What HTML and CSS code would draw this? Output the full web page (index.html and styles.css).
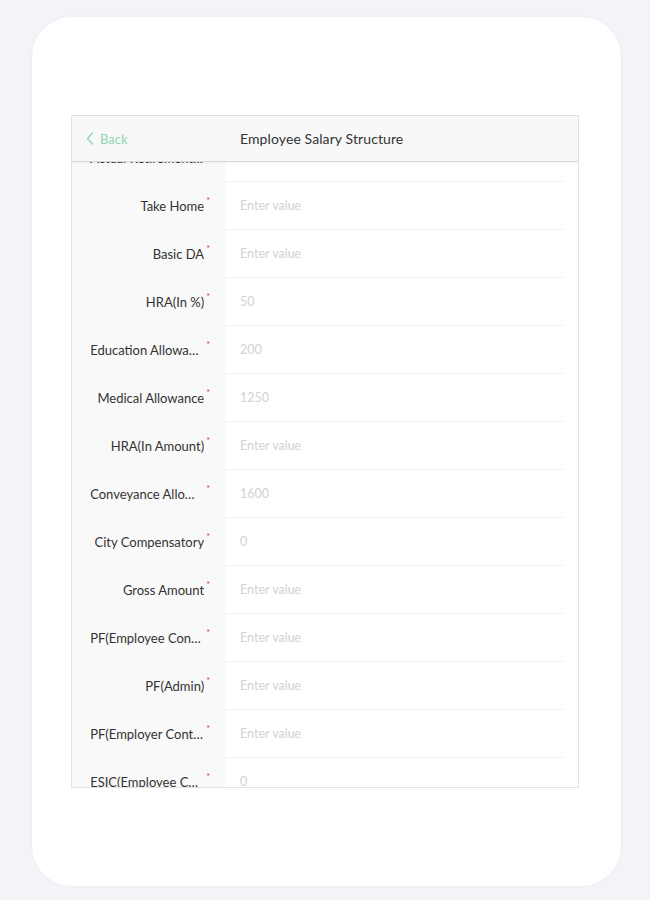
FILE: index.html
```html
<!DOCTYPE html>
<html lang="en">
<head>
<meta charset="utf-8">
<title>Employee Salary Structure</title>
<link rel="stylesheet" href="styles.css">
</head>
<body>
<div class="card">
  <div class="frame">
    <div class="header">
      <div class="back">
        <svg class="chev" width="8" height="13" viewBox="0 0 8 13"><path d="M6.5 1 L1.5 6.5 L6.5 12" fill="none" stroke="currentColor" stroke-width="1.4" stroke-linecap="round" stroke-linejoin="round"/></svg>
        <span>Back</span>
      </div>
      <div class="title">Employee Salary Structure</div>
    </div>
    <div class="scroll">
      <div class="list">
        <div class="row"><div class="label"><span class="txt">Actual Retirement Amt</span><span class="req">*</span></div><div class="value"><span class="ph">5000</span></div></div>
        <div class="row"><div class="label"><span class="txt">Take Home</span><span class="req">*</span></div><div class="value"><span class="ph">Enter value</span></div></div>
        <div class="row"><div class="label"><span class="txt">Basic DA</span><span class="req">*</span></div><div class="value"><span class="ph">Enter value</span></div></div>
        <div class="row"><div class="label"><span class="txt">HRA(In %)</span><span class="req">*</span></div><div class="value"><span class="ph">50</span></div></div>
        <div class="row"><div class="label"><span class="txt">Education Allowance</span><span class="req">*</span></div><div class="value"><span class="ph">200</span></div></div>
        <div class="row"><div class="label"><span class="txt">Medical Allowance</span><span class="req">*</span></div><div class="value"><span class="ph">1250</span></div></div>
        <div class="row"><div class="label"><span class="txt">HRA(In Amount)</span><span class="req">*</span></div><div class="value"><span class="ph">Enter value</span></div></div>
        <div class="row"><div class="label"><span class="txt">Conveyance Allowance</span><span class="req">*</span></div><div class="value"><span class="ph">1600</span></div></div>
        <div class="row"><div class="label"><span class="txt">City Compensatory</span><span class="req">*</span></div><div class="value"><span class="ph">0</span></div></div>
        <div class="row"><div class="label"><span class="txt">Gross Amount</span><span class="req">*</span></div><div class="value"><span class="ph">Enter value</span></div></div>
        <div class="row"><div class="label"><span class="txt">PF(Employee Contribution)</span><span class="req">*</span></div><div class="value"><span class="ph">Enter value</span></div></div>
        <div class="row"><div class="label"><span class="txt">PF(Admin)</span><span class="req">*</span></div><div class="value"><span class="ph">Enter value</span></div></div>
        <div class="row"><div class="label"><span class="txt">PF(Employer Contribution)</span><span class="req">*</span></div><div class="value"><span class="ph">Enter value</span></div></div>
        <div class="row"><div class="label"><span class="txt">ESIC(Employee Contribution)</span><span class="req">*</span></div><div class="value"><span class="ph">0</span></div></div>
      </div>
    </div>
  </div>
</div>
</body>
</html>
```

FILE: styles.css
```css
html, body {
  margin: 0;
  padding: 0;
}
body {
  background: #f3f4f7;
  font-family: "Lato", "Liberation Sans", sans-serif;
  width: 650px;
  height: 900px;
  overflow: hidden;
}
.card {
  margin: 17px 0 0 32px;
  width: 589px;
  height: 869px;
  box-sizing: border-box;
  background: #ffffff;
  border-radius: 40px;
  box-shadow: 0 0 4px rgba(0, 0, 0, 0.04);
  padding: 98px 0 0 39px;
}
.frame {
  width: 508px;
  height: 673px;
  box-sizing: border-box;
  border: 1px solid #e4e4e4;
  border-top-color: #dcdcdc;
  display: flex;
  flex-direction: column;
  background: #ffffff;
}
.header {
  height: 46px;
  box-sizing: border-box;
  flex: none;
  background: #f8f8f8;
  border-bottom: 1px solid #d9d9d9;
  display: flex;
  align-items: center;
  box-shadow: 0 1px 2px rgba(0,0,0,0.05);
  position: relative;
  z-index: 1;
}
.back {
  display: flex;
  align-items: center;
  gap: 6px;
  color: #93d4b3;
  font-size: 13px;
  padding-left: 14px;
  width: 168px;
  box-sizing: border-box;
}
.chev {
  display: block;
}
.title {
  font-size: 14px;
  color: #333333;
  letter-spacing: 0.1px;
}
.scroll {
  flex: 1;
  overflow: hidden;
  background: linear-gradient(to right, #f9f9f9 0, #f9f9f9 153px, #ffffff 153px);
}
.list {
  margin-top: -28px;
}
.row {
  display: grid;
  grid-template-columns: 153px 1fr;
  height: 48px;
}
.label {
  display: flex;
  justify-content: flex-end;
  align-items: center;
  padding-right: 15px;
  font-size: 13px;
  color: #333333;
  min-width: 0;
}
.txt {
  max-width: 114px;
  white-space: nowrap;
  overflow: hidden;
  text-overflow: ellipsis;
}
.req {
  color: #d9303a;
  font-size: 9px;
  align-self: flex-start;
  margin-top: 13px;
  margin-left: 2px;
}
.value {
  display: flex;
  align-items: center;
  margin-right: 14px;
  padding-left: 15px;
  border-bottom: 1px solid #f1f1f1;
  font-size: 12.5px;
  color: #d2d2d2;
}
```
